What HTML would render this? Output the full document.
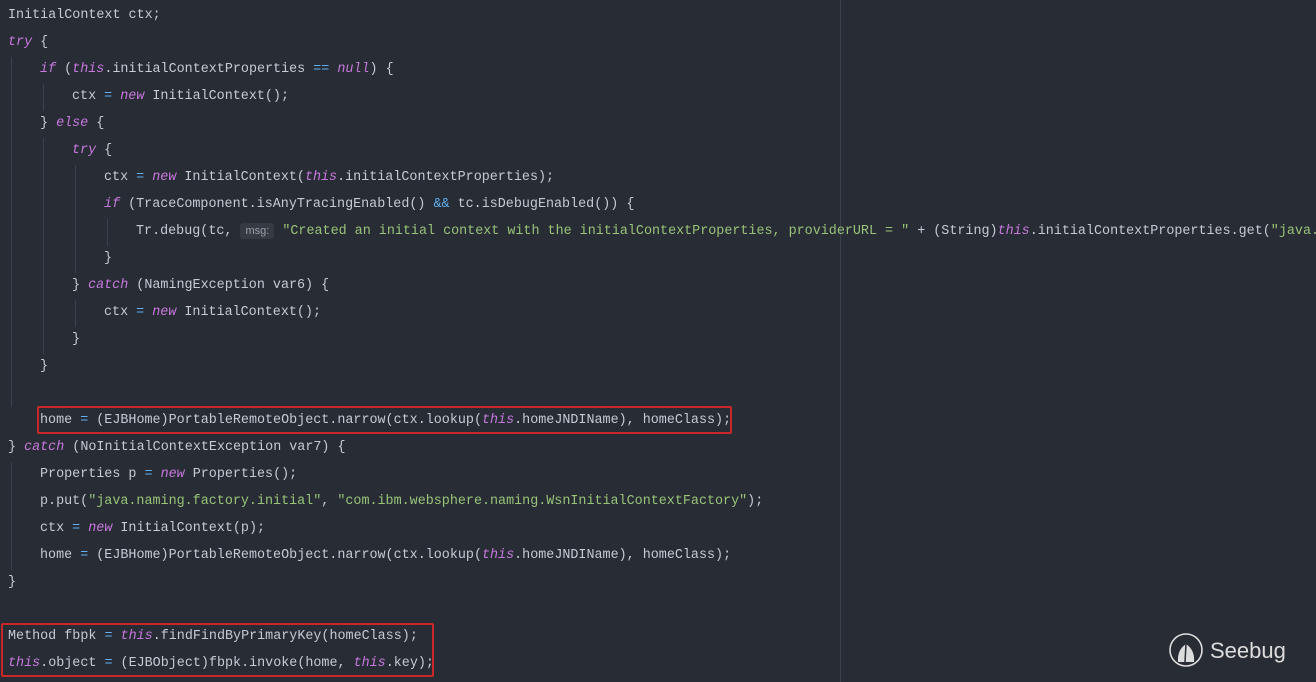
<!DOCTYPE html><html><head><style>
body{margin:0;width:1316px;height:682px;background:#282c34;overflow:hidden;position:relative;font-family:"Liberation Mono",monospace;font-size:13.4px;color:#c5cad3}
.l{position:absolute;white-space:pre;height:27px;line-height:27px}
.k{color:#c678dd;font-style:italic}
.o{color:#61afef}
.s{color:#98c379}
.g{position:absolute;width:1px;background:#3b404a}
.b{position:absolute;border:2.5px solid #c8282a;border-radius:2px}
.h{background:#353a43;color:#9aa0a8;font-size:11px;padding:2px 5px;border-radius:3px;font-family:"Liberation Sans",sans-serif}
</style></head><body>
<div class="g" style="left:840px;top:0;height:682px"></div>
<div class="g" style="left:11px;top:57px;height:350px"></div>
<div class="g" style="left:43px;top:84px;height:27px"></div>
<div class="g" style="left:43px;top:138px;height:216px"></div>
<div class="g" style="left:75px;top:165px;height:108px"></div>
<div class="g" style="left:75px;top:300px;height:27px"></div>
<div class="g" style="left:107px;top:219px;height:27px"></div>
<div class="g" style="left:11px;top:462px;height:108px"></div>
<div class="l" style="left:8px;top:2px">InitialContext ctx;</div>
<div class="l" style="left:8px;top:29px"><span class="k">try</span> {</div>
<div class="l" style="left:40px;top:56px"><span class="k">if</span> (<span class="k">this</span>.initialContextProperties <span class="o">==</span> <span class="k">null</span>) {</div>
<div class="l" style="left:72px;top:83px">ctx <span class="o">=</span> <span class="k">new</span> InitialContext();</div>
<div class="l" style="left:40px;top:110px">} <span class="k">else</span> {</div>
<div class="l" style="left:72px;top:137px"><span class="k">try</span> {</div>
<div class="l" style="left:104px;top:164px">ctx <span class="o">=</span> <span class="k">new</span> InitialContext(<span class="k">this</span>.initialContextProperties);</div>
<div class="l" style="left:104px;top:191px"><span class="k">if</span> (TraceComponent.isAnyTracingEnabled() <span class="o">&amp;&amp;</span> tc.isDebugEnabled()) {</div>
<div class="l" style="left:136px;top:218px;width:1180px;overflow:hidden">Tr.debug(tc, <span class="h">msg:</span> <span class="s">"Created an initial context with the initialContextProperties, providerURL = "</span> + (String)<span class="k">this</span>.initialContextProperties.get(<span class="s">"java.</span></div>
<div class="l" style="left:104px;top:245px">}</div>
<div class="l" style="left:72px;top:272px">} <span class="k">catch</span> (NamingException var6) {</div>
<div class="l" style="left:104px;top:299px">ctx <span class="o">=</span> <span class="k">new</span> InitialContext();</div>
<div class="l" style="left:72px;top:326px">}</div>
<div class="l" style="left:40px;top:353px">}</div>
<div class="l" style="left:40px;top:407px">home <span class="o">=</span> (EJBHome)PortableRemoteObject.narrow(ctx.lookup(<span class="k">this</span>.homeJNDIName), homeClass);</div>
<div class="l" style="left:8px;top:434px">} <span class="k">catch</span> (NoInitialContextException var7) {</div>
<div class="l" style="left:40px;top:461px">Properties p <span class="o">=</span> <span class="k">new</span> Properties();</div>
<div class="l" style="left:40px;top:488px">p.put(<span class="s">"java.naming.factory.initial"</span>, <span class="s">"com.ibm.websphere.naming.WsnInitialContextFactory"</span>);</div>
<div class="l" style="left:40px;top:515px">ctx <span class="o">=</span> <span class="k">new</span> InitialContext(p);</div>
<div class="l" style="left:40px;top:542px">home <span class="o">=</span> (EJBHome)PortableRemoteObject.narrow(ctx.lookup(<span class="k">this</span>.homeJNDIName), homeClass);</div>
<div class="l" style="left:8px;top:569px">}</div>
<div class="l" style="left:8px;top:623px">Method fbpk <span class="o">=</span> <span class="k">this</span>.findFindByPrimaryKey(homeClass);</div>
<div class="l" style="left:8px;top:650px"><span class="k">this</span>.object <span class="o">=</span> (EJBObject)fbpk.invoke(home, <span class="k">this</span>.key);</div>
<div class="b" style="left:37px;top:406px;width:691px;height:24px"></div>
<div class="b" style="left:1px;top:623px;width:429px;height:50px"></div>
<svg style="position:absolute;left:1168px;top:632px" width="40" height="40" viewBox="0 0 40 40"><circle cx="18" cy="18" r="16" fill="none" stroke="#ddd" stroke-width="1.6"/><path d="M10 30 Q9 18 18 12 Q27 18 26 30 Z" fill="#ddd"/><path d="M18 12 L17 30" stroke="#282c34" stroke-width="1.5"/></svg>
<div style="position:absolute;left:1210px;top:638px;font-family:'Liberation Sans',sans-serif;font-size:22px;color:#ddd">Seebug</div>
</body></html>
